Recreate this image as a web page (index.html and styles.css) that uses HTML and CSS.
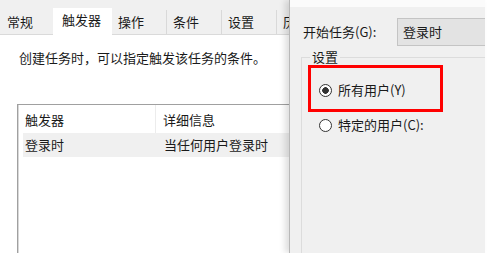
FILE: index.html
```html
<!DOCTYPE html>
<html lang="zh-CN">
<head>
<meta charset="utf-8">
<link rel="stylesheet" href="styles.css">
</head>
<body>
<div class="screen">
  <div class="left">
    <div class="tabs">
      <div class="tab first">常规</div>
      <div class="tab active">触发器</div>
      <div class="tab">操作</div>
      <div class="tab">条件</div>
      <div class="tab">设置</div>
      <div class="tab last">历史记录</div>
    </div>
    <p class="desc">创建任务时，可以指定触发该任务的条件。</p>
    <div class="list">
      <div class="row head"><span class="c1">触发器</span><span class="c2">详细信息</span></div>
      <div class="row sel"><span class="c1">登录时</span><span class="c2">当任何用户登录时</span></div>
    </div>
  </div>
  <div class="right">
    <div class="topstrip"></div>
    <div class="field">
      <span class="flabel">开始任务(G):</span>
      <div class="combo">登录时</div>
    </div>
    <fieldset class="group">
      <legend>设置</legend>
      <div class="mark">
        <div class="radio"><span class="dot checked"></span>所有用户(Y)</div>
      </div>
      <div class="radio second"><span class="dot"></span>特定的用户(C):</div>
    </fieldset>
  </div>
  <div class="edge"></div>
</div>
</body>
</html>
```

FILE: styles.css
```css
html, body {
  margin: 0;
  padding: 0;
  background: #ffffff;
}
body {
  font-family: "Noto Sans CJK SC", "Noto Sans", sans-serif;
  font-size: 13px;
  color: #1a1a1a;
}
.screen {
  display: flex;
  width: 502px;
  height: 253px;
  overflow: hidden;
}
.left {
  width: 289px;
  flex: none;
  height: 253px;
  overflow: hidden;
  background: #ffffff;
}
.tabs {
  display: flex;
  align-items: flex-end;
  height: 34px;
  background: #f0f0f0;
  border-bottom: 1px solid #dadada;
  white-space: nowrap;
}
.tab {
  flex: none;
  box-sizing: border-box;
  width: 55px;
  height: 24px;
  line-height: 24px;
  padding-left: 6px;
  border-right: 1px solid #d9d9d9;
}
.tab.first {
  width: 53px;
  padding-left: 7px;
  border-right: none;
}
.tab.active {
  width: 59px;
  height: 27px;
  line-height: 24px;
  padding-left: 9px;
  padding-bottom: 3px;
  margin-bottom: -1px;
  background: #ffffff;
  border-right: none;
}
.tab.last {
  width: 12px;
  overflow: hidden;
  border-right: none;
}
.desc {
  margin: 13px 0 0 19px;
  line-height: 20px;
  white-space: nowrap;
}
.list {
  margin: 36px 0 0 17px;
  width: 300px;
  height: 160px;
  border: 1px solid #a0a0a0;
  border-right: none;
  box-shadow: inset 1px 0 0 #d8d8d8;
}
.row {
  display: flex;
  white-space: nowrap;
}
.row.head {
  height: 28px;
  line-height: 30px;
}
.row.head .c1 {
  width: 130px;
  padding-left: 7px;
  border-right: 1px solid #ececec;
}
.row.head .c2 {
  padding-left: 7px;
}
.row.sel {
  margin-left: 5px;
  height: 24px;
  line-height: 24px;
  background: #f0f0f0;
}
.row.sel .c1 {
  width: 131px;
  padding-left: 2px;
}
.row.sel .c2 {
  padding-left: 8px;
}
.right {
  position: relative;
  width: 196px;
  flex: none;
  height: 253px;
  box-sizing: border-box;
  background: #f0f0f0;
  border-left: 1px solid #b8b8b8;
  box-shadow: -4px 0 6px rgba(0, 0, 0, 0.13);
  overflow: hidden;
}
.topstrip {
  height: 7px;
  background: #fbfbfb;
}
.field {
  display: flex;
  align-items: center;
  margin-top: 11px;
  padding-left: 13px;
  white-space: nowrap;
}
.flabel {
  width: 94px;
  flex: none;
  line-height: 28px;
}
.combo {
  flex: none;
  width: 110px;
  box-sizing: border-box;
  height: 28px;
  line-height: 26px;
  padding-left: 5px;
  background: #e3e3e3;
  border: 1px solid #c4c4c4;
}
.group {
  margin: 3px -30px 0 11px;
  padding: 0;
  height: 240px;
  border: 1px solid #dcdcdc;
  min-width: 0;
}
.group legend {
  margin-left: 8px;
  padding: 0 2px;
  line-height: 16px;
}
.mark {
  margin-left: 6px;
  width: 135px;
  height: 47px;
  box-sizing: border-box;
  border: 3px solid #ff0000;
  display: flex;
  align-items: center;
  padding: 3px 0 0 8px;
}
.radio {
  display: flex;
  align-items: center;
  gap: 6px;
  white-space: nowrap;
  line-height: 20px;
}
.radio.second {
  margin-left: 17px;
  height: 26px;
}
.dot {
  flex: none;
  width: 13px;
  height: 13px;
  box-sizing: border-box;
  border-radius: 50%;
  border: 1px solid #333333;
  background: #ffffff;
}
.dot.checked {
  background: radial-gradient(circle, #333333 0 3px, #ffffff 3.6px);
}
.edge {
  flex: 1;
  background: #ffffff;
}
```
